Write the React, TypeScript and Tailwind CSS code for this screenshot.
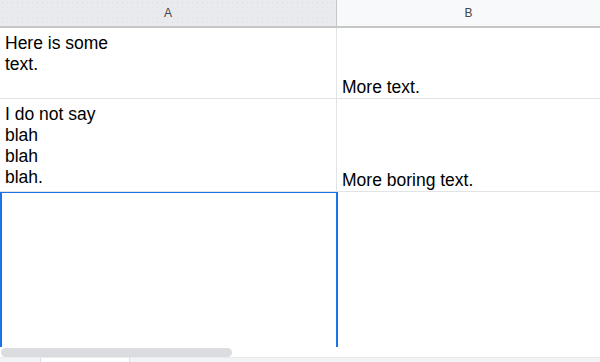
export default function App() {
  const font = { fontFamily: '"Liberation Sans", Arial, sans-serif' };
  return (
    <div className="w-[600px] h-[362px] overflow-hidden bg-white flex flex-col" style={font}>
      {/* header */}
      <div className="flex h-[28px] border-b-[2px] border-[#c4c7c5] shrink-0">
        <div
          className="w-[337px] shrink-0 flex items-center justify-center bg-[#e8eaed] border-r border-[#c4c7c5] text-[12px] text-[#444746]"
          style={{
            backgroundImage: 'radial-gradient(circle, #dcdee1 0.6px, transparent 0.8px)',
            backgroundSize: '5px 5px',
          }}
        >
          A
        </div>
        <div className="flex-1 flex items-center justify-center bg-[#f8f9fa] text-[12px] text-[#444746]">B</div>
      </div>
      {/* row 1 */}
      <div className="flex h-[71px] border-b border-[#e2e3e3] shrink-0 text-[17.5px] leading-[21px] text-[#000]">
        <div className="w-[337px] shrink-0 border-r border-[#e2e3e3] pl-[5px] pt-[5px]">
          Here is some
          <br />
          text.
        </div>
        <div className="flex-1 flex items-end pl-[5px] pb-0">More text.</div>
      </div>
      {/* row 2 */}
      <div className="flex h-[93px] border-b border-[#e2e3e3] shrink-0 text-[17.5px] leading-[21px] text-[#000]">
        <div className="w-[337px] shrink-0 border-r border-[#e2e3e3] pl-[5px] pt-[5px]">
          I do not say
          <br />
          blah
          <br />
          blah
          <br />
          blah.
        </div>
        <div className="flex-1 flex items-end pl-[5px] pb-0">More boring text.</div>
      </div>
      {/* row 3 selected */}
      <div className="flex h-[155px] shrink-0">
        <div className="w-[338px] shrink-0 border-2 border-[#1a73e8] border-b-0 border-t-[1.5px]"></div>
        <div className="flex-1"></div>
      </div>
      {/* scrollbar */}
      <div className="h-[10px] shrink-0 flex items-center px-[1px]">
        <div className="w-[231px] h-[9px] rounded-full bg-[#dadce0]"></div>
      </div>
      {/* bottom strip */}
      <div className="flex-1 flex bg-[#f1f3f4] border-t border-[#e8eaed]">
        <div className="w-[41px] border-r border-[#dadce0]"></div>
        <div className="w-[89px] bg-white border-r border-[#dadce0]"></div>
        <div className="flex-1"></div>
      </div>
    </div>
  );
}
